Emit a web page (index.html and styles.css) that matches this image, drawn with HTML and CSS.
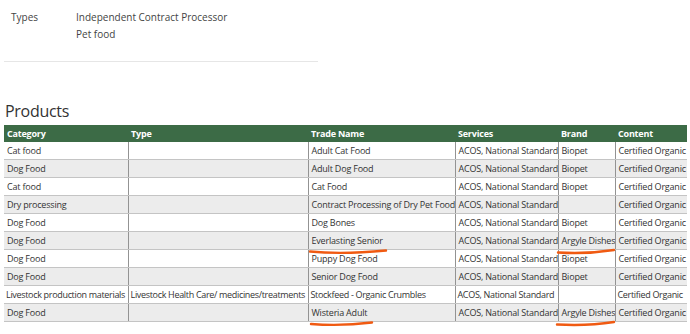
FILE: index.html
```html
<!DOCTYPE html>
<html>
<head>
<meta charset="utf-8">
<link rel="stylesheet" href="styles.css">
</head>
<body>
<div class="page">
  <div class="types">
    <div class="label">Types</div>
    <div class="values">
      <div>Independent Contract Processor</div>
      <div>Pet food</div>
    </div>
  </div>
  <hr class="sep">
  <h2 class="title">Products</h2>
  <div class="tablewrap">
    <table class="products">
      <colgroup>
        <col class="c1"><col class="c2"><col class="c3"><col class="c4"><col class="c5"><col class="c6">
      </colgroup>
      <thead>
        <tr><th>Category</th><th>Type</th><th>Trade Name</th><th>Services</th><th>Brand</th><th>Content</th></tr>
      </thead>
      <tbody>
        <tr><td>Cat food</td><td></td><td>Adult Cat Food</td><td>ACOS, National Standard</td><td>Biopet</td><td>Certified Organic</td></tr>
        <tr><td>Dog Food</td><td></td><td>Adult Dog Food</td><td>ACOS, National Standard</td><td>Biopet</td><td>Certified Organic</td></tr>
        <tr><td>Cat food</td><td></td><td>Cat Food</td><td>ACOS, National Standard</td><td>Biopet</td><td>Certified Organic</td></tr>
        <tr><td>Dry processing</td><td></td><td>Contract Processing of Dry Pet Food</td><td>ACOS, National Standard</td><td></td><td>Certified Organic</td></tr>
        <tr><td>Dog Food</td><td></td><td>Dog Bones</td><td>ACOS, National Standard</td><td>Biopet</td><td>Certified Organic</td></tr>
        <tr><td>Dog Food</td><td></td><td>Everlasting Senior</td><td>ACOS, National Standard</td><td>Argyle Dishes</td><td>Certified Organic</td></tr>
        <tr><td>Dog Food</td><td></td><td>Puppy Dog Food</td><td>ACOS, National Standard</td><td>Biopet</td><td>Certified Organic</td></tr>
        <tr><td>Dog Food</td><td></td><td>Senior Dog Food</td><td>ACOS, National Standard</td><td>Biopet</td><td>Certified Organic</td></tr>
        <tr class="tight"><td>Livestock production materials</td><td>Livestock Health Care/ medicines/treatments</td><td>Stockfeed - Organic Crumbles</td><td>ACOS, National Standard</td><td></td><td>Certified Organic</td></tr>
        <tr><td>Dog Food</td><td></td><td>Wisteria Adult</td><td>ACOS, National Standard</td><td>Argyle Dishes</td><td>Certified Organic</td></tr>
      </tbody>
    </table>
  </div>
  <svg class="marks" width="690" height="334" viewBox="0 0 690 334">
    <path d="M310 251.5 C330 253.5 360 253 386 250.5" />
    <path d="M558 252.5 C575 253.5 595 253 614 250" />
    <path d="M311 324 C330 325.5 352 325 372 322.5" />
    <path d="M557 324.5 C575 325.5 595 325 614 322" />
  </svg>
</div>
</body>
</html>
```
FILE: styles.css
```css
html, body {
  margin: 0;
  padding: 0;
  background: #ffffff;
}
body {
  font-family: "Open Sans", "Noto Sans", sans-serif;
  color: #333;
  width: 690px;
  height: 334px;
  overflow: hidden;
}
.page {
  position: relative;
  padding: 0 3px 0 4px;
}
.types {
  display: flex;
  padding-top: 9px;
  font-size: 10px;
  line-height: 17px;
  color: #444;
}
.types .label {
  width: 65px;
  padding-left: 7px;
}
.sep {
  margin: 18px 0 0 0;
  width: 314px;
  border: 0;
  border-top: 1px solid #e6e6e6;
}
.title {
  margin: 38px 0 0 1px;
  font-weight: 400;
  font-size: 16px;
  letter-spacing: -0.3px;
  line-height: 22px;
  color: #333;
}
.tablewrap {
  margin-top: 3px;
}
.products {
  border-collapse: collapse;
  table-layout: fixed;
  width: 683px;
  font-size: 9px;
  letter-spacing: -0.2px;
  color: #333;
}
.c1 { width: 124px; }
.c2 { width: 180px; }
.c3 { width: 147px; }
.c4 { width: 103px; }
.c5 { width: 57px; }
.c6 { width: 72px; }
.products th {
  background: #3c6b46;
  color: #fff;
  font-weight: 700;
  text-align: left;
  height: 17px;
  padding: 0 3px;
  white-space: nowrap;
  overflow: hidden;
  border: 0;
}
.products td {
  height: 17px;
  padding: 0 1px 0 3px;
  white-space: nowrap;
  overflow: hidden;
  border-left: 1px solid #939393;
  border-right: 1px solid #939393;
  border-bottom: 1px solid #c4c4c4;
}
.products tr.tight td {
  letter-spacing: -0.32px;
  padding-left: 2px;
  padding-right: 0;
}
.products td:first-child { border-left: 0; }
.products td:last-child { border-right: 0; }
.products tbody tr:nth-child(even) td { background: #ececec; }
.marks {
  position: absolute;
  left: 0;
  top: 0;
  pointer-events: none;
}
.marks path {
  fill: none;
  stroke: #f05a12;
  stroke-width: 2.4;
  stroke-linecap: round;
}
```
